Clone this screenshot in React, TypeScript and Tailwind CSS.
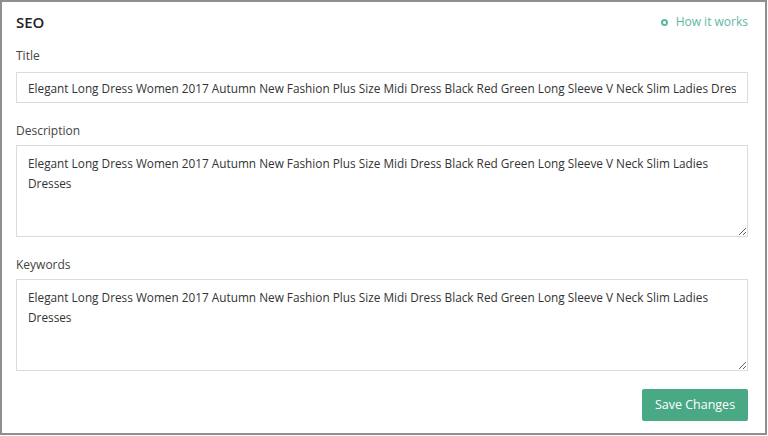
import { useState } from 'react';

const sample =
  'Elegant Long Dress Women 2017 Autumn New Fashion Plus Size Midi Dress Black Red Green Long Sleeve V Neck Slim Ladies Dresses';

export default function App() {
  const [title, setTitle] = useState(sample);
  const [description, setDescription] = useState(sample);
  const [keywords, setKeywords] = useState(sample);

  return (
    <div
      className="w-[767px] h-[435px] bg-white border-2 border-[#8f8f8f] pl-[14px] pr-[17px] pt-[10px] text-[#333]"
      style={{ fontFamily: '"Open Sans", "Noto Sans", sans-serif' }}
    >
      <div className="flex items-center justify-between h-[20px]">
        <h2 className="text-[15px] font-semibold text-[#222]">SEO</h2>
        <a href="#" className="flex items-center gap-[8px] text-[12px] text-[#5cb8a5]">
          <span className="inline-block w-[7px] h-[7px] rounded-full border-2 border-[#5cb8a5]" />
          How it works
        </a>
      </div>

      <label className="block mt-[14px] h-[20px] leading-[20px] text-[12px] text-[#444]">Title</label>
      <input
        value={title}
        onChange={(e) => setTitle(e.target.value)}
        className="block mt-[6px] w-full h-[31px] px-[11px] pt-px text-[11.8px] text-[#333] border border-[#dcdcdc] outline-none"
      />

      <label className="block mt-[18px] h-[20px] leading-[20px] text-[12px] text-[#444]">Description</label>
      <textarea
        value={description}
        onChange={(e) => setDescription(e.target.value)}
        className="block mt-[4px] w-full h-[92px] px-[11px] py-[7px] text-[11.8px] leading-[20px] text-[#333] border border-[#dcdcdc] outline-none"
      />

      <label className="block mt-[18px] h-[20px] leading-[20px] text-[12px] text-[#444]">Keywords</label>
      <textarea
        value={keywords}
        onChange={(e) => setKeywords(e.target.value)}
        className="block mt-[4px] w-full h-[92px] px-[11px] py-[7px] text-[11.8px] leading-[20px] text-[#333] border border-[#dcdcdc] outline-none"
      />

      <div className="flex justify-end mt-[18px]">
        <button className="h-[32px] w-[106px] rounded-[2px] bg-[#4aa985] text-white text-[12.5px]">
          Save Changes
        </button>
      </div>
    </div>
  );
}
